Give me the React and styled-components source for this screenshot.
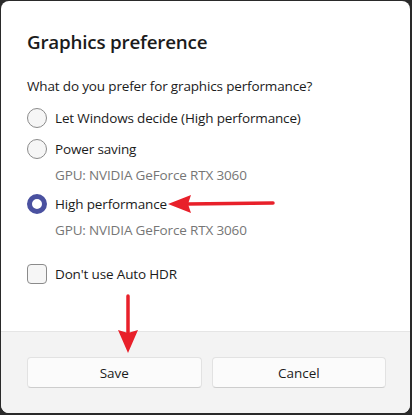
import React from 'react';
import styled, { createGlobalStyle } from 'styled-components';

const GlobalStyle = createGlobalStyle`
  html, body {
    margin: 0;
    padding: 0;
    background: #2a2a2a;
  }
  * {
    box-sizing: border-box;
  }
`;

const Page = styled.div`
  width: 412px;
  height: 415px;
  padding: 1px 2px 2px 1px;
  background: #2a2a2a;
  font-family: 'Open Sans', 'Noto Sans', sans-serif;
  color: #1b1b1b;
`;

const Dialog = styled.div`
  position: relative;
  height: 100%;
  display: flex;
  flex-direction: column;
  background: #fff;
  border-radius: 8px;
  overflow: hidden;
`;

const Body = styled.div`
  flex: 1;
  display: flex;
  flex-direction: column;
  padding: 27px 25px 0 26px;
`;

const Title = styled.h1`
  margin: 0;
  font-size: 18.8px;
  line-height: 28px;
  font-weight: 600;
  letter-spacing: -0.2px;
`;

const Prompt = styled.div`
  margin-top: 20px;
  font-size: 13.5px;
  line-height: 20px;
  letter-spacing: -0.15px;
`;

const OptionRow = styled.label`
  display: flex;
  align-items: center;
  gap: 8px;
  margin-top: ${(props) => props.$gap}px;
  height: 20px;
  font-size: 13.5px;
  letter-spacing: -0.15px;
`;

const Radio = styled.span`
  width: 20px;
  height: 20px;
  border-radius: 50%;
  flex-shrink: 0;
  background: ${(props) => (props.$checked ? '#fff' : '#f6f6f6')};
  border: ${(props) => (props.$checked ? '5px solid #4a51a0' : '1px solid #8b8b8b')};
`;

const Check = styled.span`
  width: 20px;
  height: 20px;
  border-radius: 4px;
  flex-shrink: 0;
  background: #f6f6f6;
  border: 1px solid #8b8b8b;
`;

const Hint = styled.div`
  margin-top: 6px;
  padding-left: 28px;
  font-size: 13.5px;
  line-height: 20px;
  letter-spacing: -0.15px;
  color: #767676;
`;

const Footer = styled.div`
  display: grid;
  grid-template-columns: 1fr 1fr;
  gap: 10px;
  padding: 25px 24px 25px 26px;
  background: #f3f3f3;
  border-top: 1px solid #e5e5e5;
`;

const Button = styled.button`
  height: 31px;
  border-radius: 4px;
  border: 1px solid #e2e2e2;
  border-bottom-color: #cdcdcd;
  background: #fbfbfb;
  font-family: inherit;
  font-size: 13.5px;
  color: #1b1b1b;
`;

const Arrow = styled.svg`
  position: absolute;
  left: ${(props) => props.$x}px;
  top: ${(props) => props.$y}px;
`;

const RED = '#e8202a';

export default function App() {
  return (
    <>
      <GlobalStyle />
      <Page>
        <Dialog>
          <Body>
            <Title>Graphics preference</Title>
            <Prompt>What do you prefer for graphics performance?</Prompt>
            <OptionRow $gap={12}>
              <Radio />
              Let Windows decide (High performance)
            </OptionRow>
            <OptionRow $gap={11}>
              <Radio />
              Power saving
            </OptionRow>
            <Hint>GPU: NVIDIA GeForce RTX 3060</Hint>
            <OptionRow $gap={9}>
              <Radio $checked />
              High performance
            </OptionRow>
            <Hint>GPU: NVIDIA GeForce RTX 3060</Hint>
            <OptionRow $gap={24}>
              <Check />
              Don&apos;t use Auto HDR
            </OptionRow>
          </Body>
          <Footer>
            <Button>Save</Button>
            <Button>Cancel</Button>
          </Footer>

          <Arrow $x={166} $y={192} width="110" height="22" viewBox="0 0 110 22">
            <line x1="20" y1="11" x2="106" y2="10" stroke={RED} strokeWidth="3.5" strokeLinecap="round" />
            <polygon points="1,11 24,2 21,11 24,20" fill={RED} />
          </Arrow>
          <Arrow $x={115} $y={291} width="24" height="62" viewBox="0 0 24 62">
            <line x1="12" y1="4" x2="12" y2="42" stroke={RED} strokeWidth="3.5" strokeLinecap="round" />
            <polygon points="12,61 2,38 12,41 22,38" fill={RED} />
          </Arrow>
        </Dialog>
      </Page>
    </>
  );
}
